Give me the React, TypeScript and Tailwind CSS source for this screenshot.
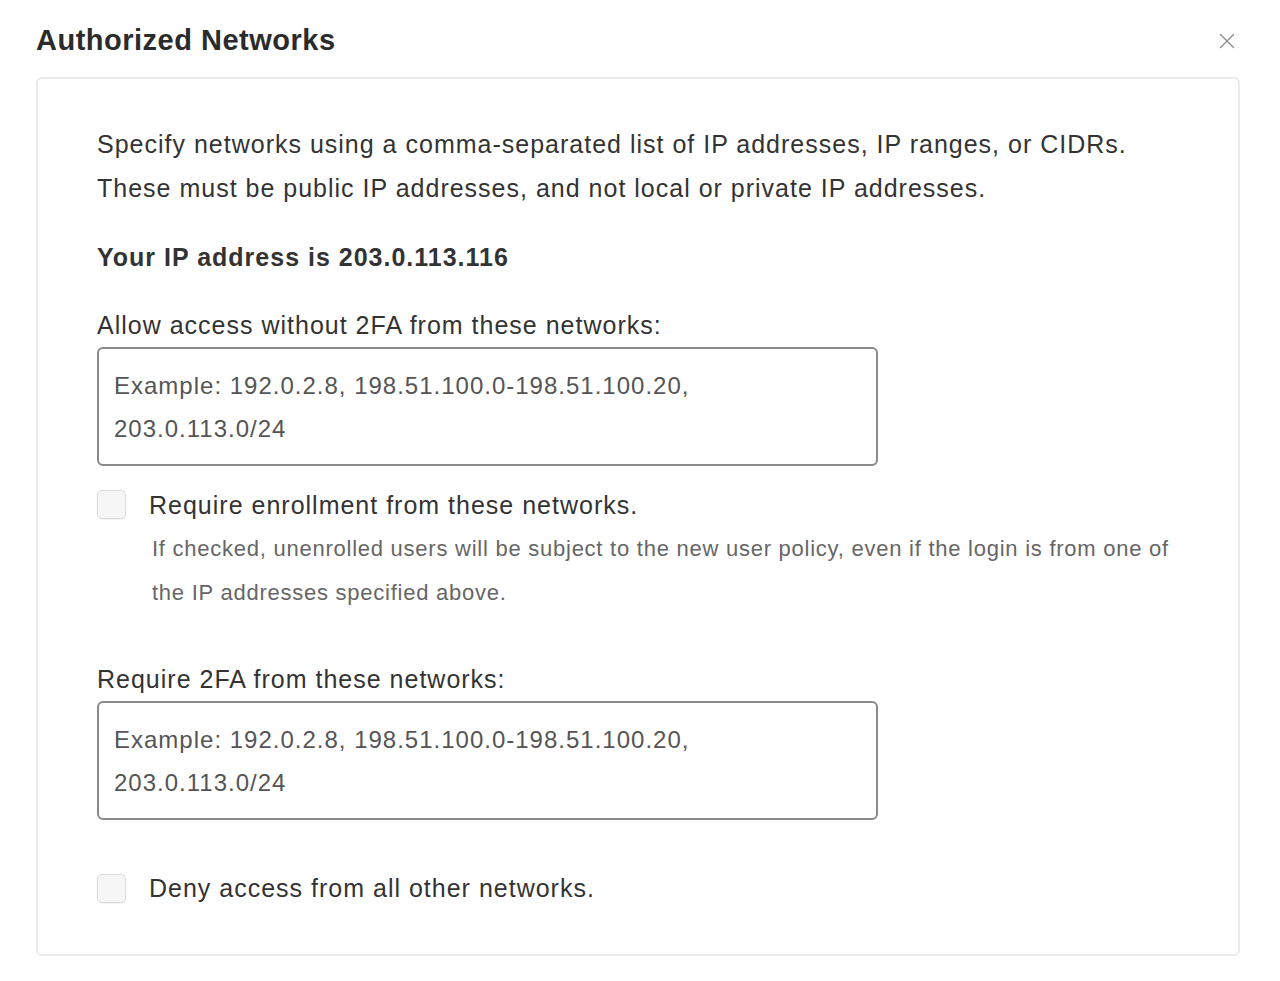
import { X } from "lucide-react";

const sample = "Example: 192.0.2.8, 198.51.100.0-198.51.100.20, 203.0.113.0/24";

function NetworkField({ label }: { label: string }) {
    return (
        <div>
            <p className="leading-[36px]">{label}</p>
            <div className="mt-[4px] w-[781px] h-[119px] rounded-[6px] border-2 border-[#8a8a8a] px-[15px] pt-[15px]">
                <p className="w-[620px] text-[24px] tracking-[1px] text-[#555] leading-[43px]">{sample}</p>
            </div>
        </div>
    );
}

function Checkbox() {
    return (
        <span className="w-[29px] h-[29px] shrink-0 rounded-[5px] border border-[#dcdcdc] bg-[#f6f6f6] shadow-[0_1px_1px_rgba(0,0,0,0.05)]" />
    );
}

export default function App() {
    return (
        <div className="w-[1280px] h-[981px] bg-white text-[#333] font-['Liberation_Sans',Arial,sans-serif]">
            <div className="flex items-center justify-between pl-[36px] pr-[40px] pt-[20px] h-[77px] pb-[15px]">
                <h1 className="text-[29px] tracking-[0.5px] font-bold text-[#2b2b2b]">Authorized Networks</h1>
                <X className="w-[26px] h-[26px] text-[#8c8c8c]" strokeWidth={1.2} />
            </div>

            <div className="mx-[36px] w-[1204px] h-[879px] rounded-[6px] border-2 border-[#ebebeb] pl-[59px] pt-[43px] text-[25px] tracking-[1px]">
                <p className="leading-[44px]">
                    Specify networks using a comma-separated list of IP addresses, IP ranges, or CIDRs.
                    <br />
                    These must be public IP addresses, and not local or private IP addresses.
                </p>

                <p className="mt-[33px] font-bold leading-[28px]">Your IP address is 203.0.113.116</p>

                <div className="mt-[36px]">
                    <NetworkField label="Allow access without 2FA from these networks:" />
                </div>

                <div className="mt-[24px] flex gap-[23px]">
                    <Checkbox />
                    <div>
                        <p className="leading-[30px]">Require enrollment from these networks.</p>
                        <p className="ml-[3px] mt-[7px] text-[22px] tracking-[0.75px] text-[#666] leading-[44px]">
                            If checked, unenrolled users will be subject to the new user policy, even if the login is from one of
                            <br />
                            the IP addresses specified above.
                        </p>
                    </div>
                </div>

                <div className="mt-[46px]">
                    <NetworkField label="Require 2FA from these networks:" />
                </div>

                <div className="mt-[53px] flex items-center gap-[23px]">
                    <Checkbox />
                    <p className="leading-[30px]">Deny access from all other networks.</p>
                </div>
            </div>
        </div>
    );
}
